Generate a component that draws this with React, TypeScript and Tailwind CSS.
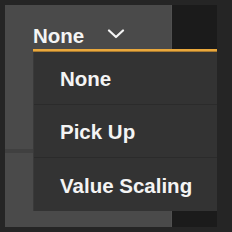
import React from "react";

export default function App() {
  const items = ["None", "Pick Up", "Value Scaling"];
  return (
    <div
      className="relative w-[232px] h-[232px] bg-[#252525] p-[5px]"
      style={{ fontFamily: '"Liberation Sans", Arial, sans-serif' }}
    >
      <div className="flex h-full">
        <div className="w-[166px] h-full bg-[#4a4a4a] flex flex-col">
          <div className="h-[148px] border-b-[4px] border-[#404040]" />
        </div>
        <div className="w-[46px] h-full bg-[#1b1b1b] border-l border-[#505050]" />
      </div>

      <div className="absolute left-[33px] top-[5px] w-[184px]">
        <div className="h-[44px] flex items-end pb-[3px]">
          <span className="text-[20.5px] leading-[20px] font-bold text-[#f4f4f4]">None</span>
          <svg
            className="ml-[23px] mb-[7px]"
            width="18"
            height="10"
            viewBox="0 0 18 10"
            fill="none"
          >
            <path d="M2 1.5 L9 8 L16 1.5" stroke="#f4f4f4" strokeWidth="2.2" strokeLinecap="round" strokeLinejoin="round" />
          </svg>
        </div>
        <div className="h-[2px] bg-[#eaa83c]" />
        <div className="h-px bg-[#a87a30]" />
        <div className="bg-[#333333] border-l border-[#3a3a3a]">
          {items.map((t, i) => (
            <div
              key={t}
              className={`h-[53px] flex items-center pl-[26px] pt-[3px] text-[20.5px] font-bold text-[#f4f4f4] ${
                i < items.length - 1 ? "border-b border-[#2b2b2b]" : ""
              }`}
            >
              {t}
            </div>
          ))}
        </div>
      </div>
    </div>
  );
}
